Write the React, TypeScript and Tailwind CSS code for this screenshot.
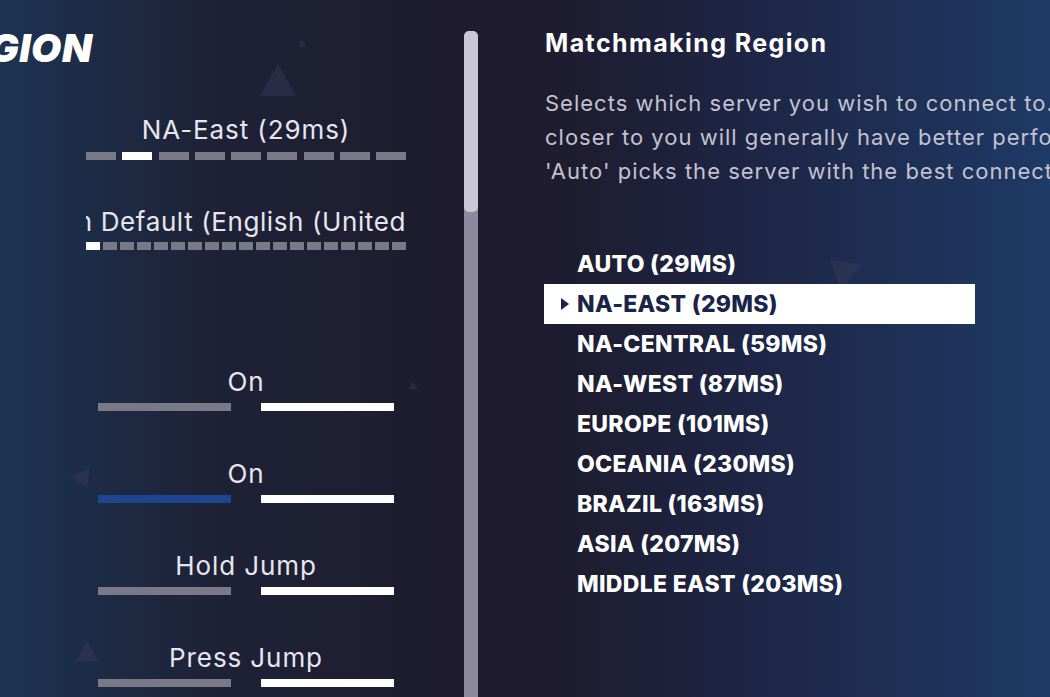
import React from "react";

const regions = [
  "AUTO (29MS)",
  "NA-EAST (29MS)",
  "NA-CENTRAL (59MS)",
  "NA-WEST (87MS)",
  "EUROPE (101MS)",
  "OCEANIA (230MS)",
  "BRAZIL (163MS)",
  "ASIA (207MS)",
  "MIDDLE EAST (203MS)",
];

function Segments({ count, active, w, gap }: { count: number; active: number; w: string; gap: string }) {
  return (
    <div className={`flex h-[8px] ${gap}`}>
      {Array.from({ length: count }).map((_, i) => (
        <div key={i} className={`h-full shrink-0 ${w} ${i === active ? "bg-white" : "bg-[#7a7988]"}`} />
      ))}
    </div>
  );
}

function ToggleRow({ label, blue }: { label: string; blue?: boolean }) {
  return (
    <div className="h-[92px] shrink-0 flex flex-col items-center">
      <div className="h-[30px] leading-[30px] text-[26px] tracking-[0.9px] text-[#e7e6ef] whitespace-nowrap">{label}</div>
      <div className="mt-[6px] flex gap-[30px]">
        <div className={`w-[133px] h-[8px] ${blue ? "bg-[#1d4590]" : "bg-[#7a7988]"}`} />
        <div className="w-[133px] h-[8px] bg-white" />
      </div>
    </div>
  );
}

function Tri({ className, points }: { className: string; points: string }) {
  return (
    <svg className={`absolute ${className}`} viewBox="0 0 40 40">
      <polygon points={points} fill="#3a3a5a" opacity="0.45" />
    </svg>
  );
}

export default function App() {
  return (
    <div
      className="relative w-[1050px] h-[697px] overflow-hidden flex bg-[linear-gradient(90deg,#1c3351_0%,#1e2237_20%,#1e1c2e_42%,#1e1c2e_53%,#1e2443_70%,#1e3a66_100%)]"
      style={{ fontFamily: "Inter, 'Noto Sans', sans-serif" }}
    >
      {/* background shapes */}
      <Tri className="left-[258px] top-[60px] w-[40px] h-[40px]" points="20,4 38,36 2,36" />
      <Tri className="left-[297px] top-[38px] w-[10px] h-[10px]" points="20,4 38,36 2,36" />
      <Tri className="left-[68px] top-[465px] w-[24px] h-[24px]" points="4,20 36,4 32,38" />
      <Tri className="left-[74px] top-[638px] w-[26px] h-[26px]" points="20,4 38,36 2,36" />
      <Tri className="left-[828px] top-[256px] w-[36px] h-[36px]" points="2,4 38,10 14,38" />
      <Tri className="left-[408px] top-[380px] w-[10px] h-[10px]" points="20,4 38,36 2,36" />

      {/* left settings column */}
      <div className="relative w-[464px] shrink-0 flex flex-col">
        <div className="h-[115px] shrink-0 pt-[28px]">
          <div className="ml-[-62px] text-[39px] leading-[40px] font-black italic text-white tracking-[0.5px]">REGION</div>
        </div>
        <div className="pl-[86px] w-[406px] flex flex-col">
          <div className="h-[92px] shrink-0 flex flex-col items-center">
            <div className="h-[30px] leading-[30px] text-[26px] tracking-[0.9px] text-[#e7e6ef] whitespace-nowrap">NA-East (29ms)</div>
            <div className="mt-[7px] w-[320px]">
              <Segments count={9} active={1} w="w-[30px]" gap="gap-[6.25px]" />
            </div>
          </div>
          <div className="h-[160px] shrink-0 flex flex-col">
            <div className="w-[320px] overflow-hidden flex justify-end h-[30px] leading-[30px] text-[26px] tracking-[0.6px] text-[#e7e6ef] whitespace-nowrap">
              <span className="shrink-0">Region Default (English (United</span>
            </div>
            <div className="mt-[5px] w-[320px]">
              <Segments count={19} active={0} w="w-[14px]" gap="gap-[3px]" />
            </div>
          </div>
          <ToggleRow label="On" />
          <ToggleRow label="On" blue />
          <ToggleRow label="Hold Jump" />
          <ToggleRow label="Press Jump" />
        </div>
      </div>

      {/* scrollbar */}
      <div className="relative w-[14px] shrink-0 pt-[31px] flex flex-col">
        <div className="flex-1 flex flex-col rounded-t-[5px] bg-[#8d899f] overflow-hidden">
          <div className="h-[181px] bg-[#c9c7d5] rounded-[5px]" />
        </div>
      </div>

      {/* right description column */}
      <div className="relative flex-1 pl-[67px] pt-[28px]">
        <div className="text-[25px] leading-[30px] font-bold tracking-[1.4px] text-white whitespace-nowrap">Matchmaking Region</div>
        <div className="mt-[28px] text-[22px] leading-[34px] tracking-[1px] text-[#c3c2d0] whitespace-nowrap">
          <div>Selects which server you wish to connect to. Servers</div>
          <div>closer to you will generally have better performance.</div>
          <div>'Auto' picks the server with the best connection.</div>
        </div>
        <div className="mt-[56px] ml-[-1px] w-[431px] flex flex-col">
          {regions.map((r, i) => {
            const sel = i === 1;
            return (
              <div
                key={r}
                className={`relative h-[40px] flex items-center pl-[33px] text-[23px] font-extrabold tracking-[0.3px] whitespace-nowrap ${
                  sel ? "bg-white text-[#1b2448]" : "text-white"
                }`}
              >
                {sel && (
                  <svg className="absolute left-[17px] top-[14px] w-[8px] h-[12px]" viewBox="0 0 8 12">
                    <polygon points="0,0 8,6 0,12" fill="#1b2448" />
                  </svg>
                )}
                {r}
              </div>
            );
          })}
        </div>
      </div>
    </div>
  );
}
